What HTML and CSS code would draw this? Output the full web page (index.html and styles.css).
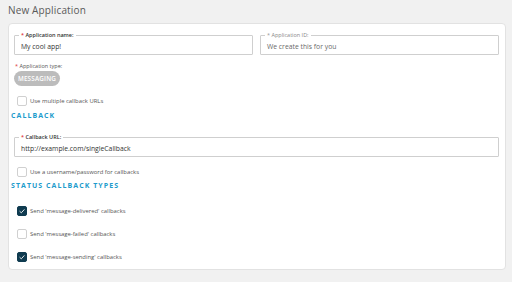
FILE: index.html
```html
<!DOCTYPE html>
<html>
<head>
<meta charset="utf-8">
<link rel="stylesheet" href="styles.css">
</head>
<body>
<h1 class="title">New Application</h1>
<div class="card">
  <div class="row">
    <div class="field">
      <span class="legend"><span class="req">*</span> Application name:</span>
      <span class="value">My cool app!</span>
    </div>
    <div class="field field-disabled">
      <span class="legend"><span class="req">*</span> Application ID:</span>
      <span class="value placeholder">We create this for you</span>
    </div>
  </div>
  <div class="type-label"><span class="req">*</span> Application type:</div>
  <div class="pill">MESSAGING</div>
  <label class="check check-first"><span class="box"></span><span>Use multiple callback URLs</span></label>
  <h2 class="heading heading-callback">CALLBACK</h2>
  <div class="field field-wide">
    <span class="legend"><span class="req">*</span> Callback URL:</span>
    <span class="value">http://example.com/singleCallback</span>
  </div>
  <label class="check check-auth"><span class="box"></span><span>Use a username/password for callbacks</span></label>
  <h2 class="heading heading-status">STATUS CALLBACK TYPES</h2>
  <label class="check check-s1"><span class="box checked"><svg viewBox="0 0 10 10" width="10" height="10"><path d="M2.6 5.2 L4.3 6.8 L7.4 3.4" fill="none" stroke="#fff" stroke-width="0.9"/></svg></span><span>Send 'message-delivered' callbacks</span></label>
  <label class="check check-s2"><span class="box"></span><span>Send 'message-failed' callbacks</span></label>
  <label class="check check-s2"><span class="box checked"><svg viewBox="0 0 10 10" width="10" height="10"><path d="M2.6 5.2 L4.3 6.8 L7.4 3.4" fill="none" stroke="#fff" stroke-width="0.9"/></svg></span><span>Send 'message-sending' callbacks</span></label>
</div>
</body>
</html>
```
FILE: styles.css
```css
* { box-sizing: border-box; }
html, body { margin: 0; padding: 0; }
body {
  width: 512px;
  height: 282px;
  background: #f1f1f1;
  font-family: "Open Sans", "Liberation Sans", sans-serif;
  color: #333;
  overflow: hidden;
}
.title {
  margin: 0;
  padding: 3px 0 0 8px;
  height: 23px;
  font-size: 10px;
  line-height: 14px;
  font-weight: 400;
  color: #5a5a5a;
  letter-spacing: 0.15px;
}
.card {
  margin-left: 8px;
  width: 498px;
  height: 247px;
  background: #fff;
  border: 1px solid #e2e2e2;
  border-radius: 4px;
  padding: 11px 6px 0 2px;
}
.row {
  display: flex;
  gap: 7px;
  margin-left: 3px;
}
.field {
  position: relative;
  flex: 1;
  height: 20px;
  border: 1px solid #cfcfcf;
  border-radius: 1px;
  display: flex;
  align-items: center;
  padding: 2px 0 0 6px;
}
.field-wide {
  margin: 16px 0 0 3px;
}
.legend {
  position: absolute;
  top: -4px;
  left: 4px;
  background: #fff;
  padding: 0 2px;
  font-size: 5.5px;
  line-height: 7px;
  font-weight: 600;
  color: #333;
}
.req { color: #d33; }
.field-disabled .legend { color: #888; font-weight: 400; }
.field-disabled .req { color: #999; }
.value {
  font-size: 6.8px;
  color: #333;
}
.placeholder { color: #6a6a6a; }
.type-label {
  margin: 7px 0 0 4px;
  font-size: 5.5px;
  line-height: 8px;
  color: #555;
}
.pill {
  margin: 1px 0 0 3px;
  width: 46px;
  height: 15px;
  border-radius: 8px;
  background: #bcbcbc;
  color: #fff;
  font-size: 6.3px;
  font-weight: 600;
  letter-spacing: 0.2px;
  display: flex;
  align-items: center;
  justify-content: center;
}
.check {
  display: flex;
  align-items: center;
  gap: 3px;
  margin-left: 6px;
  height: 10px;
  font-size: 5.9px;
  color: #555;
}
.check-first { margin-top: 10px; }
.check-auth { margin-top: 10px; }
.check-s1 { margin-top: 15px; }
.check-s2 { margin-top: 13px; }
.box {
  width: 10px;
  height: 10px;
  border: 1px solid #d0d0d0;
  border-radius: 2px;
  background: #fff;
  flex: none;
  display: flex;
}
.box.checked {
  background: #0f3b50;
  border-color: #0f3b50;
}
.box svg { margin: -1px; }
.heading {
  margin: 0;
  height: 10px;
  font-size: 7px;
  line-height: 10px;
  font-weight: 700;
  letter-spacing: 1.05px;
  color: #1d9bcc;
}
.heading-callback { margin-top: 5px; }
.heading-status { margin-top: 4px; }
```
